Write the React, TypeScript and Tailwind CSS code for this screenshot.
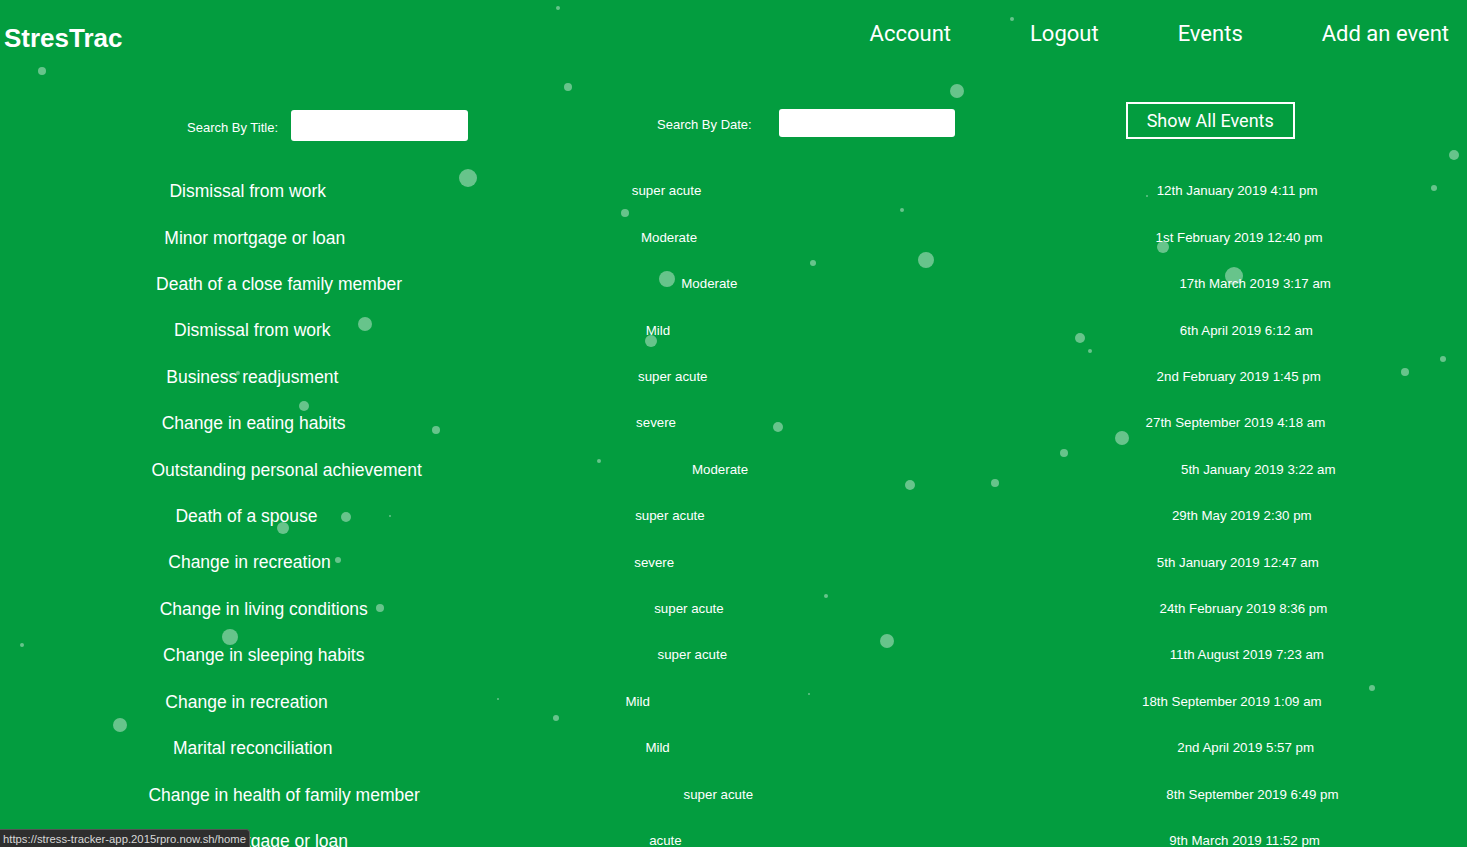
const events = [
  ["Dismissal from work", "super acute", "12th January 2019 4:11 pm"],
  ["Minor mortgage or loan", "Moderate", "1st February 2019 12:40 pm"],
  ["Death of a close family member", "Moderate", "17th March 2019 3:17 am"],
  ["Dismissal from work", "Mild", "6th April 2019 6:12 am"],
  ["Business readjusment", "super acute", "2nd February 2019 1:45 pm"],
  ["Change in eating habits", "severe", "27th September 2019 4:18 am"],
  ["Outstanding personal achievement", "Moderate", "5th January 2019 3:22 am"],
  ["Death of a spouse", "super acute", "29th May 2019 2:30 pm"],
  ["Change in recreation", "severe", "5th January 2019 12:47 am"],
  ["Change in living conditions", "super acute", "24th February 2019 8:36 pm"],
  ["Change in sleeping habits", "super acute", "11th August 2019 7:23 am"],
  ["Change in recreation", "Mild", "18th September 2019 1:09 am"],
  ["Marital reconciliation", "Mild", "2nd April 2019 5:57 pm"],
  ["Change in health of family member", "super acute", "8th September 2019 6:49 pm"],
  ["Minor mortgage or loan", "acute", "9th March 2019 11:52 pm"],
  ["Change in recreation", "Mild", "3rd May 2019 9:14 am"],
];

// particle dots: x, y, radius
const dots: [number, number, number][] = [
  [42, 71, 4], [558, 8, 2], [568, 87, 4], [957, 91, 7], [1012, 19, 2],
  [468, 178, 9], [1454, 155, 5], [1434, 188, 3], [1147, 196, 1], [625, 213, 4],
  [902, 210, 2], [1163, 247, 6], [926, 260, 8], [813, 263, 3], [667, 279, 8],
  [1234, 276, 9], [365, 324, 7], [651, 341, 6], [1080, 338, 5], [1090, 351, 2],
  [1443, 359, 3], [1405, 372, 4], [238, 373, 2], [304, 406, 5], [436, 430, 4],
  [778, 427, 5], [1122, 438, 7], [1064, 453, 4], [599, 461, 2], [910, 485, 5],
  [995, 483, 4], [346, 517, 5], [390, 516, 1], [283, 528, 6], [338, 560, 3],
  [380, 608, 4], [826, 596, 2], [230, 637, 8], [887, 641, 7], [22, 645, 2],
  [1372, 688, 3], [498, 699, 1], [809, 694, 1], [120, 725, 7], [556, 718, 3],
];

export default function App() {
  return (
    <div
      className="relative min-h-screen overflow-hidden bg-[#039d3f] text-white"
      style={{ fontFamily: "'Liberation Sans', Arial, sans-serif" }}
    >
      <div className="flex justify-between items-start h-[102px]">
        <div className="pl-[4px] pt-[23px] text-[26px] leading-[30px] font-bold">StresTrac</div>
        <nav
          className="flex gap-[79px] pr-[18px] pt-[21px] text-[22px] leading-[26px]"
          style={{ fontFamily: "Roboto, sans-serif" }}
        >
          <a>Account</a>
          <a>Logout</a>
          <a>Events</a>
          <a>Add an event</a>
        </nav>
      </div>

      <div className="flex items-start pl-[187px] text-[13px]">
        <div className="flex items-center gap-[13px] mt-[8px]">
          <label className="mt-[4px]">Search By Title:</label>
          <input className="w-[177px] h-[31px] bg-white rounded-[3px]" />
        </div>
        <div className="flex items-center gap-[27px] mt-[7px] ml-[189px]">
          <label className="mt-[4px]">Search By Date:</label>
          <input className="w-[176px] h-[28px] bg-white rounded-[3px]" />
        </div>
        <button
          className="ml-[171px] w-[169px] h-[37px] border-2 border-white text-[18px]"
          style={{ fontFamily: "Roboto, sans-serif" }}
        >
          Show All Events
        </button>
      </div>

      <div className="mt-[27px]">
        {events.map(([title, level, date], i) => (
          <div key={i} className="flex items-center h-[46.43px]">
            <div className="grow px-[33px] text-center text-[17.5px]">{title}</div>
            <div className="grow flex justify-center">
              <div className="w-[239px] text-left text-[13.3px]">{level}</div>
            </div>
            <div className="grow px-[13px] text-center text-[13.3px]">{date}</div>
          </div>
        ))}
      </div>

      {dots.map(([x, y, r], i) => (
        <span
          key={i}
          className="absolute rounded-full bg-white/40 pointer-events-none"
          style={{ left: x - r, top: y - r, width: r * 2, height: r * 2 }}
        />
      ))}

      <div className="fixed bottom-0 left-0 h-[18px] px-[3px] bg-[#2e2e2e] text-[#d8d8d8] text-[11.3px] leading-[18px] rounded-tr-[4px] border-t border-r border-[#555]">
        https://stress-tracker-app.2015rpro.now.sh/home
      </div>
    </div>
  );
}
